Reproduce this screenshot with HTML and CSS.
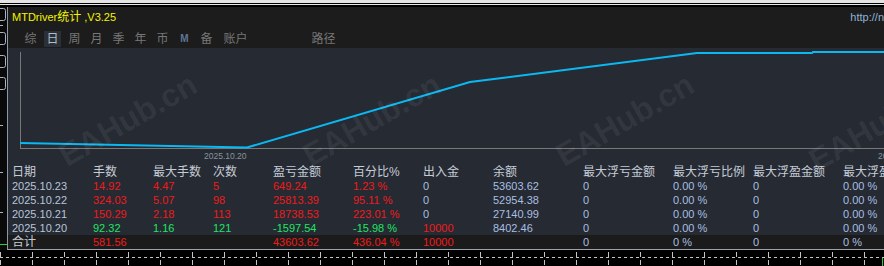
FILE: index.html
```html
<!DOCTYPE html>
<html>
<head>
<meta charset="utf-8">
<link rel="stylesheet" href="styles.css">
</head>
<body>
<div class="topstrip"></div>
<div class="frame">
    <div class="rail">
        <svg width="7" height="243" viewBox="0 0 7 243">
            <rect x="-3" y="1.5" width="8.5" height="12" rx="2" fill="none" stroke="#aab4c2"/>
            <rect x="-3" y="25.5" width="8.5" height="12" rx="2" fill="none" stroke="#aab4c2"/>
            <rect x="-3" y="48.5" width="8.5" height="12" rx="2" fill="none" stroke="#aab4c2"/>
            <rect x="-3" y="70.5" width="8.5" height="12" rx="2" fill="none" stroke="#aab4c2"/>
            <line x1="0" y1="18.5" x2="3" y2="18.5" stroke="#aab4c2"/>
            <line x1="0" y1="118.5" x2="3" y2="118.5" stroke="#aab4c2"/>
            <line x1="0" y1="165.5" x2="3" y2="165.5" stroke="#aab4c2"/>
            <line x1="0" y1="205.5" x2="3" y2="205.5" stroke="#aab4c2"/>
            <line x1="0" y1="237.5" x2="7" y2="237.5" stroke="#2ecc40"/>
        </svg>
    </div>
    <div class="panel">
        <div class="titlebar">
            <div class="titlerow">
                <span class="title">MTDriver<span class="cjk">统计</span> ,V3.25</span>
                <span class="link">http://n</span>
            </div>
            <div class="tabs">
                <span class="tab">综</span>
                <span class="tab active">日</span>
                <span class="tab">周</span>
                <span class="tab">月</span>
                <span class="tab">季</span>
                <span class="tab">年</span>
                <span class="tab">币</span>
                <span class="tab m">M</span>
                <span class="tab">备</span>
                <span class="tab wide">账户</span>
                <span class="tab path">路径</span>
            </div>
        </div>
        <div class="chart">
            <svg width="876" height="117" viewBox="0 0 876 117">
                <line x1="12.5" y1="4" x2="12.5" y2="100.5" stroke="#787878"/>
                <line x1="12" y1="100.5" x2="876" y2="100.5" stroke="#787878"/>
                <polyline fill="none" stroke="#0bb8f2" stroke-width="2"
                    points="12,95 239,99.5 462,34 689,5 804,5 805,4 876,4"/>
                <text x="196" y="111" class="axis">2025.10.20</text>
                <text x="870" y="111" class="axis">2025.10.23</text>
            </svg>
        </div>
        <table class="stats">
            <colgroup>
                <col style="width:85px"><col style="width:60px"><col style="width:60px"><col style="width:60px">
                <col style="width:80px"><col style="width:70px"><col style="width:70px"><col style="width:90px">
                <col style="width:90px"><col style="width:80px"><col style="width:90px"><col style="width:41px">
            </colgroup>
            <tr>
                <th>日期</th><th>手数</th><th>最大手数</th><th>次数</th><th>盈亏金额</th><th>百分比%</th>
                <th>出入金</th><th>余额</th><th>最大浮亏金额</th><th>最大浮亏比例</th><th>最大浮盈金额</th><th>最大浮盈比例</th>
            </tr>
            <tr>
                <td class="date">2025.10.23</td><td class="red">14.92</td><td class="red">4.47</td><td class="red">5</td>
                <td class="red">649.24</td><td class="red">1.23 %</td><td class="blue">0</td><td class="blue">53603.62</td>
                <td class="blue">0</td><td class="blue">0.00 %</td><td class="blue">0</td><td class="blue">0.00 %</td>
            </tr>
            <tr>
                <td class="date">2025.10.22</td><td class="red">324.03</td><td class="red">5.07</td><td class="red">98</td>
                <td class="red">25813.39</td><td class="red">95.11 %</td><td class="blue">0</td><td class="blue">52954.38</td>
                <td class="blue">0</td><td class="blue">0.00 %</td><td class="blue">0</td><td class="blue">0.00 %</td>
            </tr>
            <tr>
                <td class="date">2025.10.21</td><td class="red">150.29</td><td class="red">2.18</td><td class="red">113</td>
                <td class="red">18738.53</td><td class="red">223.01 %</td><td class="blue">0</td><td class="blue">27140.99</td>
                <td class="blue">0</td><td class="blue">0.00 %</td><td class="blue">0</td><td class="blue">0.00 %</td>
            </tr>
            <tr>
                <td class="date">2025.10.20</td><td class="green">92.32</td><td class="green">1.16</td><td class="green">121</td>
                <td class="green">-1597.54</td><td class="green">-15.98 %</td><td class="red">10000</td><td class="blue">8402.46</td>
                <td class="blue">0</td><td class="blue">0.00 %</td><td class="blue">0</td><td class="blue">0.00 %</td>
            </tr>
            <tr class="total">
                <td class="label">合计</td><td class="red">581.56</td><td></td><td></td>
                <td class="red">43603.62</td><td class="red">436.04 %</td><td class="red">10000</td><td></td>
                <td class="blue">0</td><td class="blue">0 %</td><td class="blue">0</td><td class="blue">0 %</td>
            </tr>
        </table>
        <span class="wm wm1">EAHub.cn</span>
        <span class="wm wm2">EAHub.cn</span>
        <span class="wm wm3">EAHub.cn</span>
        <span class="wm wm4">EAHub.cn</span>
    </div>
</div>
<div class="ruler">
    <svg width="884" height="16" viewBox="0 0 884 16">
        <defs>
            <pattern id="tick" width="32" height="16" patternUnits="userSpaceOnUse">
                <line x1="0.5" y1="2" x2="0.5" y2="16" stroke="#c4c4c4" stroke-dasharray="5 3"/>
            </pattern>
        </defs>
        <line x1="0" y1="7.5" x2="884" y2="7.5" stroke="#c4c4c4" stroke-dasharray="3 3"/>
        <rect width="884" height="16" fill="url(#tick)"/>
        <line x1="882.5" y1="8" x2="882.5" y2="16" stroke="#2ecc40"/>
    </svg>
</div>
</body>
</html>
```

FILE: styles.css
```css
body{
    margin: 0;
    width: 884px;
    height: 266px;
    overflow: hidden;
    background: #000;
    font-family: "Liberation Sans", "Noto Sans CJK SC", sans-serif;
}
svg{
    display: block;
}
.topstrip{
    height: 7px;
    background: linear-gradient(#e4e4e4 0 3px, #000 3px 4px, #e8e8e8 4px 5px, #000 5px);
}
.frame{
    display: flex;
    height: 243px;
}
.rail{
    width: 7px;
    background: #0a0a0a;
    border-right: 1px solid #8e97a6;
}
.panel{
    position: relative;
    flex: 1;
    overflow: hidden;
    background: #252a33;
}
.titlebar{
    height: 41px;
    background: #1c1c1c;
}
.titlerow{
    display: flex;
    justify-content: space-between;
    height: 20px;
    line-height: 20px;
    padding-left: 4px;
}
.title{
    color: #f4f400;
    font-size: 11px;
}
.title .cjk{
    font-size: 12px;
}
.link{
    color: #8fb3d6;
    font-size: 11px;
}
.tabs{
    display: flex;
    gap: 5px;
    margin-top: 4px;
    padding-left: 14px;
}
.tab{
    width: 17px;
    height: 16px;
    line-height: 16px;
    text-align: center;
    font-size: 12px;
    color: #777;
}
.tab.active{
    background: #2a3039;
    color: #b4bcc8;
}
.tab.m{
    font-size: 10px;
    font-weight: bold;
    color: #5f7594;
}
.tab.wide{
    width: 31px;
}
.tab.path{
    width: 27px;
    margin-left: 54px;
}
.chart{
    height: 117px;
}
.axis{
    font-family: "Liberation Sans", sans-serif;
    font-size: 8.5px;
    fill: #8b929c;
}
.stats{
    width: 876px;
    table-layout: fixed;
    border-collapse: collapse;
    border-bottom: 1px solid #9ba3ae;
}
.stats th, .stats td{
    height: 14px;
    padding: 0;
    line-height: 14px;
    text-align: left;
    font-weight: normal;
    font-size: 11px;
    white-space: nowrap;
    overflow: hidden;
}
.stats th{
    font-size: 12px;
    color: #c6ccd6;
}
.stats th:first-child, .stats td:first-child{
    padding-left: 4px;
}
.date{
    color: #b9c5da;
}
.red{
    color: #ee1b1b;
}
.green{
    color: #20e464;
}
.blue{
    color: #a9bfe0;
}
.total{
    background: #1b1b1b;
}
.stats .label{
    font-size: 12px;
    color: #c6ccd6;
}
.wm{
    position: absolute;
    transform: translate(-50%, -50%) rotate(-30deg);
    font-family: "Liberation Sans", sans-serif;
    font-weight: bold;
    font-size: 32px;
    color: rgba(255, 255, 255, 0.07);
    white-space: nowrap;
    pointer-events: none;
}
.wm1{ left: 120px; top: 113px; }
.wm2{ left: 364px; top: 113px; }
.wm3{ left: 617px; top: 113px; }
.wm4{ left: 870px; top: 118px; }
```
